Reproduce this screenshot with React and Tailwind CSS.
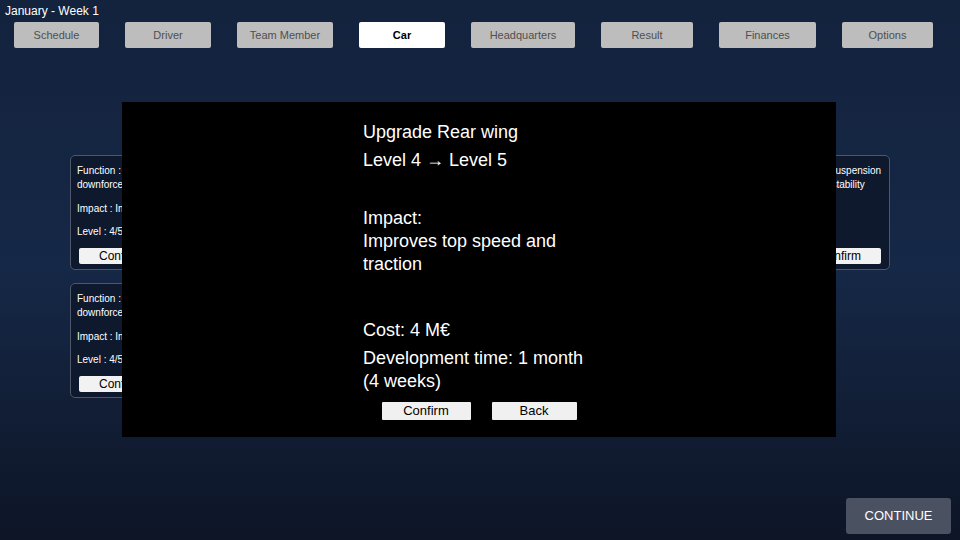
import React from "react";

const tabs = [
  { label: "Schedule", w: "w-[85px]" },
  { label: "Driver", w: "w-[86px]" },
  { label: "Team Member", w: "w-[96px]" },
  { label: "Car", w: "w-[86px]", active: true },
  { label: "Headquarters", w: "w-[104px]" },
  { label: "Result", w: "w-[92px]" },
  { label: "Finances", w: "w-[97px]" },
  { label: "Options", w: "w-[91px]" },
];

function PartCard({ line1, line2, impact, level }) {
  return (
    <div className="w-[100px] h-[115px] rounded-[5px] border border-[#4d5769] bg-[#0e192d] pt-[8px] px-[6px] pb-[7px] flex flex-col text-white text-[10px] leading-[14px]">
      <div className="whitespace-nowrap">{line1}</div>
      <div className="whitespace-nowrap">{line2}</div>
      <div className="mt-[10px] whitespace-nowrap">{impact}</div>
      <div className="mt-[9px] whitespace-nowrap">{level}</div>
      <button className="mt-[9px] mx-[2px] h-[16px] rounded-[2px] bg-[#f2f2f2] text-black text-[12px] leading-[16px]">
        Confirm
      </button>
    </div>
  );
}

export default function App() {
  return (
    <div className="relative w-[960px] h-[540px] overflow-hidden flex flex-col bg-gradient-to-b from-[#13223d] via-[#162847] to-[#0d1526] font-['Liberation_Sans',Arial,sans-serif]">
      <div className="pl-[5px] pt-[3px] text-[12px] leading-[16px] text-white">
        January - Week 1
      </div>
      <nav className="mt-[3px] pl-[14px] flex gap-[26px]">
        {tabs.map((t) => (
          <button
            key={t.label}
            className={`${t.w} h-[26px] rounded-[2px] text-[11px] ${
              t.active
                ? "bg-white text-black font-bold"
                : "bg-[#bdbdbd] text-[#4f4f4f]"
            }`}
          >
            {t.label}
          </button>
        ))}
      </nav>

      <main className="mt-[107px] px-[70px] flex flex-col gap-[13px]">
        <div className="flex justify-between">
          <PartCard
            line1="Function : Generates rear"
            line2="downforce"
            impact="Impact : Improves top speed"
            level="Level : 4/5"
          />
          <PartCard
            line1="Tighter suspension"
            line2="greater stability"
            impact="Impact :"
            level="Level : 3"
          />
        </div>
        <div className="flex">
          <PartCard
            line1="Function : Generates front"
            line2="downforce"
            impact="Impact : Improves grip"
            level="Level : 4/5"
          />
        </div>
      </main>

      <div className="mt-auto flex justify-end pr-[9px] pb-[6px]">
        <button className="w-[105px] h-[36px] rounded-[3px] bg-[#4a5161] text-white text-[13px]">
          CONTINUE
        </button>
      </div>

      <div className="absolute left-[122px] top-[102px] w-[714px] h-[335px] bg-black flex flex-col items-center text-white">
        <div className="w-[232px] pt-[19px] text-[18px] leading-[23px]">
          <p>Upgrade Rear wing</p>
          <p className="mt-[5px]">Level 4 → Level 5</p>
          <p className="mt-[35px]">Impact:</p>
          <p>Improves top speed and traction</p>
          <p className="mt-[43px]">Cost: 4 M€</p>
          <p className="mt-[5px]">Development time: 1 month (4 weeks)</p>
        </div>
        <div className="mt-[9px] flex justify-center gap-[21px]">
          <button className="w-[89px] h-[18px] rounded-[1px] bg-[#f0f0f0] text-black text-[13px] leading-[18px]">
            Confirm
          </button>
          <button className="w-[85px] h-[18px] rounded-[1px] bg-[#f0f0f0] text-black text-[13px] leading-[18px]">
            Back
          </button>
        </div>
      </div>
    </div>
  );
}
